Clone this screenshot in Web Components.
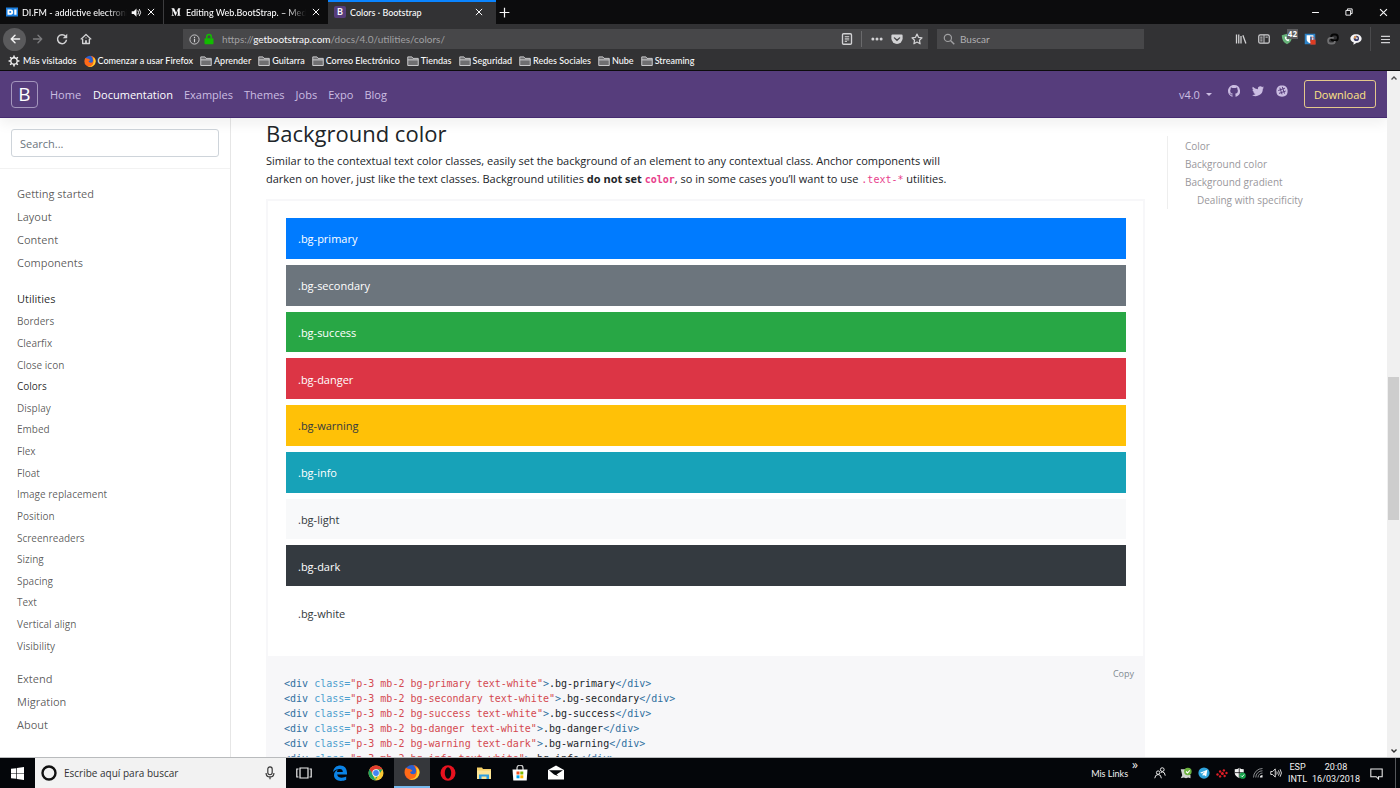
<!DOCTYPE html>
<html lang="es">
<head>
<meta charset="utf-8">
<meta name="viewport" content="width=device-width, initial-scale=1">
<title>Colors · Bootstrap</title>
<style>
  html, body { height: 100%; margin: 0; }
  body {
    --ui-font: "Open Sans", "Noto Sans", sans-serif;
    --chrome-font: Lato, "Open Sans", sans-serif;
    --mono-font: "DejaVu Sans Mono", "Liberation Mono", monospace;
    font-family: var(--ui-font);
    font-size: 11px;
    display: flex;
    flex-direction: column;
    overflow: hidden;
    background: #fff;
  }
</style>
</head>
<body>
  <browser-tabs></browser-tabs>
  <browser-toolbar></browser-toolbar>
  <bookmarks-bar></bookmarks-bar>
  <page-viewport>
    <docs-navbar slot="header"></docs-navbar>
    <docs-sidebar></docs-sidebar>
    <docs-content>
      <color-swatch color="#007bff">.bg-primary</color-swatch>
      <color-swatch color="#6c757d">.bg-secondary</color-swatch>
      <color-swatch color="#28a745">.bg-success</color-swatch>
      <color-swatch color="#dc3545">.bg-danger</color-swatch>
      <color-swatch color="#ffc107" dark>.bg-warning</color-swatch>
      <color-swatch color="#17a2b8">.bg-info</color-swatch>
      <color-swatch color="#f8f9fa" dark>.bg-light</color-swatch>
      <color-swatch color="#343a40">.bg-dark</color-swatch>
      <color-swatch color="#ffffff" dark>.bg-white</color-swatch>
      <code-block slot="code"></code-block>
    </docs-content>
    <docs-toc></docs-toc>
  </page-viewport>
  <task-bar></task-bar>

<script>
// Every icon is drawn in a 16x16 box.
const icons = {
  difm: `<rect y="2" width="16" height="12" fill="#1b7fe0"/><path d="M2 4.5h4.5q3 0 3 3.5t-3 3.5H2zM11 4.5h3v7h-3z" fill="#fff"/><path d="M4.5 6.7h1.3q1.2 0 1.2 1.3t-1.2 1.3H4.5z" fill="#1b7fe0"/>`,
  sound: `<path d="M1 6h3l4-4v12L4 10H1z" fill="currentColor"/><path d="M10 5q2 3 0 6M12 3q4 5 0 10" fill="none" stroke="currentColor" stroke-width="1.4"/>`,
  close: `<path d="M3 3l10 10M13 3L3 13" stroke="currentColor" stroke-width="1.6"/>`,
  medium: `<path d="M1 2h4l3.2 7L11.500 2H15v1l-1 .8v8.400l1 .8v1h-5v-1l1-.8V5L7.500 14h-.6L3 5.500V12l1.500 1.200V14H1v-.8L2.200 12V3.800L1 3z" fill="currentColor"/>`,
  plus: `<path d="M8 2v12M2 8h12" stroke="currentColor" stroke-width="1.5"/>`,
  minimize: `<path d="M3 8h10" stroke="currentColor" stroke-width="1.5"/>`,
  restore: `<path d="M3 5.500h7.500V13H3zM5.500 5.500V3H13v7.500h-2.500" fill="none" stroke="currentColor" stroke-width="1.5"/>`,
  back: `<path d="M14 8H3M8 3L3 8l5 5" fill="none" stroke="currentColor" stroke-width="2" stroke-linecap="round" stroke-linejoin="round"/>`,
  forward: `<path d="M2 8h11M8 3l5 5-5 5" fill="none" stroke="currentColor" stroke-width="1.8" stroke-linecap="round" stroke-linejoin="round"/>`,
  reload: `<path d="M12.800 4.500a6 6 0 1 0 1.200 4.500" fill="none" stroke="currentColor" stroke-width="2"/><path d="M15 1v6H9z" fill="currentColor"/>`,
  home: `<path d="M1 8.500L8 2l7 6.500M3.500 7.500V14h9V7.500" fill="none" stroke="currentColor" stroke-width="1.8" stroke-linejoin="round"/><path d="M6.800 9.500h2.400V14H6.800z" fill="currentColor"/><path d="M7 6.500h2" stroke="currentColor"/>`,
  info: `<circle cx="8" cy="8" r="6.700" fill="none" stroke="currentColor" stroke-width="1.3"/><path d="M8 7v5M8 4v1.700" stroke="currentColor" stroke-width="1.700"/>`,
  lock: `<path d="M5 7V5a3 3 0 0 1 6 0v2" fill="none" stroke="#12bc00" stroke-width="2"/><rect x="2" y="7" width="12" height="8" rx="1" fill="#12bc00"/>`,
  reader: `<rect x="2" y="1" width="12" height="14" rx="1.500" fill="none" stroke="currentColor" stroke-width="1.8"/><path d="M5 4.800h6M5 7h6M5 9.200h6M5 11.300h3" stroke="currentColor" stroke-width="1.200"/>`,
  dots: `<circle cx="2.500" cy="8" r="2" fill="currentColor"/><circle cx="8" cy="8" r="2" fill="currentColor"/><circle cx="13.500" cy="8" r="2" fill="currentColor"/>`,
  pocket: `<path d="M2 2h12q1.500 0 1.500 1.500V7a7.500 7.500 0 0 1-15 0V3.500Q.5 2 2 2z" fill="currentColor"/><path d="M4.500 6.500L8 9.800l3.500-3.300" fill="none" stroke="#474749" stroke-width="1.8" stroke-linecap="round"/>`,
  star: `<path d="M8 1.500l2 4.300 4.700.6-3.400 3.300.8 4.700L8 12.100l-4.100 2.300.8-4.700L1.300 6.400 6 5.800z" fill="none" stroke="currentColor" stroke-width="1.6" stroke-linejoin="round"/>`,
  search: `<circle cx="6.500" cy="6.500" r="4.800" fill="none" stroke="currentColor" stroke-width="1.6"/><path d="M10 10l5 5" stroke="currentColor" stroke-width="1.8"/>`,
  library: `<path d="M2 2v12M5 2v12M8 4v10M10.500 3l4 11" stroke="currentColor" stroke-width="1.700"/>`,
  panel: `<rect x="1" y="2.500" width="14" height="11" rx="2" fill="none" stroke="currentColor" stroke-width="1.6"/><path d="M8 3v10M3 5.500h3M3 8h3M3 10.500h3M10 5.500h3" stroke="currentColor" stroke-width="1.300"/>`,
  shield: `<path d="M8 1l7 2q0 9-7 12Q1 12 1 3z" fill="#67b279"/><path d="M5 5q0 5 5 6l1-2-1.500-1-1 .6L6.800 7l.7-1L6.800 4.500z" fill="#fff"/>`,
  bitwarden: `<rect x="1" y="1" width="14" height="14" fill="#2c83c8"/><path d="M3.500 3h9v5q0 4-4.500 5.500Q3.500 12 3.500 8z" fill="#fff"/><path d="M8 4.500h3V8q0 2.500-3 4z" fill="#2c83c8"/><path d="M9.500 9V7.500a2 2 0 0 1 4 0V9" fill="none" stroke="#dd4c33"/><rect x="8.500" y="9" width="7" height="6.500" fill="#dd3c22"/>`,
  chain: `<g fill="none" stroke-width="2.400"><rect x="5.500" y="2" width="9" height="8" rx="3.500" stroke="#050505"/><path d="M9 6.500H5A3.500 3.500 0 0 0 1.500 10v.500A3.500 3.500 0 0 0 5 14h2a3.500 3.500 0 0 0 3.500-3.500" stroke="#707072"/></g>`,
  bubble: `<path d="M8 1.500c4.500 0 7.500 2.500 7.500 5.800S12.500 13 9 13l-4.500 2.500.5-3C2 11.500.5 9.500.5 7.300.5 4 3.500 1.500 8 1.500z" fill="#f4f4f6"/><circle cx="8.500" cy="7.300" r="3.500" fill="#3b3c66"/><path d="M5 7.300a3.500 3.500 0 0 1 3.500-3.500v3.500z" fill="#e0954a"/><circle cx="9" cy="7" r="1.400" fill="#d9dbe8"/>`,
  menu: `<path d="M1.500 3.500h13M1.500 8h13M1.500 12.500h13" stroke="currentColor" stroke-width="1.8"/>`,
  gear: `<circle cx="8" cy="8" r="4.300" fill="none" stroke="currentColor" stroke-width="1.8"/><path d="M8 .8v2.500M8 12.700v2.500M.8 8h2.500M12.700 8h2.500M2.900 2.900l1.800 1.800M11.300 11.300l1.800 1.800M13.100 2.900l-1.800 1.800M4.700 11.300l-1.800 1.800" stroke="currentColor" stroke-width="2"/>`,
  folder: `<path d="M1 14V2.500h5.500L8 4.500h7V14z" fill="#6f6f71" stroke="#d6d6d8" stroke-width="1.200"/><path d="M1 6.500h14" stroke="#d6d6d8" stroke-width="1.200"/>`,
  firefox: `<circle cx="8" cy="8" r="7" fill="#2b5fd0"/><path d="M2 3.500l1.800 1.300Q5.500 4.300 7 5.500L8.500 7 6 8q.5 2.500 3.500 2.300Q12 10 12 7.500 12.300 3.500 9 1q6.500 1 6.500 7.500A7.500 7.500 0 0 1 .5 8.500Q.5 5.500 2 3.500z" fill="#ff6a16"/><path d="M15.500 8.500A7.500 7.500 0 0 1 5 15q6.500.5 7.500-4.500T11.500 3q4 1.500 4 5.500z" fill="#ffd02e"/><path d="M.6 8q.2 5 4.700 7.300Q1 14 .6 8z" fill="#e22850"/>`,
  github: `<path d="M8 0C3.580 0 0 3.580 0 8c0 3.540 2.290 6.530 5.470 7.590.4.070.55-.17.55-.38v-1.490c-2.010.37-2.530-.49-2.690-.94-.09-.23-.48-.94-.82-1.130-.28-.15-.68-.52-.01-.53.63-.01 1.080.58 1.230.82.72 1.210 1.870.87 2.330.66.070-.52.280-.87.510-1.070-1.780-.2-3.640-.89-3.640-3.950 0-.87.310-1.590.820-2.150-.08-.2-.36-1.020.080-2.120 0 0 .67-.21 2.200.82a7.600 7.600 0 0 1 4 0c1.530-1.040 2.200-.82 2.200-.82.440 1.100.160 1.920.080 2.120.510.560.820 1.270.820 2.150 0 3.070-1.870 3.750-3.650 3.950.29.250.54.730.54 1.480v2.200c0 .21.150.46.550.38A8 8 0 0 0 8 0z" fill="currentColor"/>`,
  twitter: `<path d="M16 3.200a6.500 6.500 0 0 1-1.900.5 3.300 3.300 0 0 0 1.400-1.800 6.500 6.500 0 0 1-2 .8A3.300 3.300 0 0 0 7.900 5.700 9.300 9.300 0 0 1 1.100 2.300a3.300 3.300 0 0 0 1 4.400 3.200 3.200 0 0 1-1.500-.4 3.300 3.300 0 0 0 2.600 3.200 3.300 3.300 0 0 1-1.500.1 3.300 3.300 0 0 0 3.100 2.300A6.600 6.600 0 0 1 0 13.200a9.300 9.300 0 0 0 14.400-8.300 6.700 6.700 0 0 0 1.600-1.700z" fill="currentColor"/>`,
  slack: `<path d="M8 .5c5 0 7.500 2.500 7.500 7.500s-2.500 7.500-7.500 7.500S.5 13 .5 8 3 .5 8 .5z" fill="currentColor"/><path d="M5.300 4l2.600 8M8.600 3l2.600 8M3.500 7.200l8-2.800M4.500 11l8-2.800" stroke="#563d7c" stroke-width="1.300" stroke-linecap="round"/>`,
  windows: `<path d="M0 2.300l6.500-.9v6.200H0zM7.300 1.300L16 0v7.600H7.300zM0 8.400h6.500v6.200L0 13.700zM7.300 8.400H16V16l-8.700-1.300z" fill="#fff"/>`,
  cortana: `<circle cx="8" cy="8" r="6.500" fill="none" stroke="#111" stroke-width="2.400"/>`,
  mic: `<rect x="5.500" y="1" width="5" height="9" rx="2.500" fill="none" stroke="#333" stroke-width="1.300"/><path d="M3.500 8q0 4.500 4.500 4.500T12.500 8M8 12.500V15" fill="none" stroke="#333" stroke-width="1.300"/>`,
  taskview: `<path d="M4 3h8v10H4zM2.500 4H.8v8h1.700M13.500 4h1.700v8h-1.700" fill="none" stroke="#eee" stroke-width="1.200"/>`,
  edge: `<path d="M1 7C1.800 2.500 4.700.5 8.200.5 12.500.5 15 3.500 15 8v1.500H5.200c.2 2.500 2.300 3.200 4.500 3.200 1.800 0 3.200-.5 4.500-1.200v3.200c-1.500.8-3.400 1.200-5.300 1.200C4.800 15.900 2 13.500 2 10.200c0-2.700 1.500-4.700 4-5.700-.6.600-.9 1.500-1 2.500h5.800c0-2-.9-3.100-3-3.100C5 3.900 2.700 5 1 7z" fill="#0b83e6"/>`,
  chrome: `<circle cx="8" cy="8" r="7.500" fill="#fcc934"/><path d="M14.500 4.300H8l-6.500 0L5 10.500 7.500 15.500A7.500 7.500 0 0 1 1.500 4.300L5 9.700l3 1.700-1 4z" fill="#1ea362"/><path d="M1.500 4.300A7.500 7.500 0 0 1 14.500 4.300H8L5 9z" fill="#e33b2e"/><circle cx="8" cy="8" r="3.700" fill="#fff"/><circle cx="8" cy="8" r="2.900" fill="#4285f4"/>`,
  opera: `<ellipse cx="8" cy="8" rx="7.500" ry="7.800" fill="#e8121f"/><ellipse cx="8" cy="8" rx="3.200" ry="5.700" fill="#04060a"/>`,
  explorer: `<path d="M1 2.500h5l1 1.500h8v10H1z" fill="#f5d069"/><path d="M1 5.500h14V14H1z" fill="#fde596"/><path d="M3 14V9.500h10V14h-2.500v-2.500h-5V14z" fill="#2f9fe0"/>`,
  store: `<path d="M5 5V3a3 3 0 0 1 6 0v2" fill="none" stroke="#ccc" stroke-width="1.300"/><path d="M.5 4.500h15l-.8 11H1.300z" fill="#fff"/><path d="M4.500 6.500h3v3h-3z" fill="#f25022"/><path d="M8.300 6.500h3v3h-3z" fill="#7fba00"/><path d="M4.500 10.300h3v3h-3z" fill="#00a4ef"/><path d="M8.300 10.300h3v3h-3z" fill="#ffb900"/>`,
  mail: `<path d="M0 5l8-4.500L16 5v9.500H0z" fill="#fff"/><path d="M1 5.300h14L8.500 9.500l2 1.800L6 9.500z" fill="#04060a"/>`,
  people: `<circle cx="11" cy="3.500" r="2.500" fill="none" stroke="#eee" stroke-width="1.300"/><circle cx="5.500" cy="7.500" r="2.300" fill="none" stroke="#eee" stroke-width="1.300"/><path d="M1 15q.5-5 4.500-5T9.800 15M9 7.500l2-1q3.500 0 4 5" fill="none" stroke="#eee" stroke-width="1.300"/>`,
  guard: `<path d="M1 3h9v4l4 4v4l-3-1-3 1-3-1-4 1 2-4z" fill="#cfd3cf"/><circle cx="10.500" cy="6" r="5" fill="#6cb33f"/><path d="M8 6l2 2 3-3.500" fill="none" stroke="#fff" stroke-width="1.500"/>`,
  telegram: `<circle cx="8" cy="8" r="7.500" fill="#2fa3dc"/><path d="M2.800 7.800l9.700-4-1.600 8.800-3-2-1.500 1.300-.4-2.700 4-3.700-5 3.200z" fill="#fff"/>`,
  radeon: `<g fill="#e01e26"><circle cx="2" cy="10" r="1.600"/><circle cx="5.500" cy="6" r="1.600"/><circle cx="10.500" cy="4.500" r="1.600"/><circle cx="14" cy="8" r="1.600"/><circle cx="8.500" cy="8.700" r="2"/><circle cx="5.500" cy="12.500" r="1.600"/><circle cx="11.500" cy="12" r="1.600"/></g>`,
  defender: `<path d="M7 1q2 2 6 2v5q0 4-6 7-6-3-6-7V3q4 0 6-2z" fill="#f4f4f4"/><path d="M7 1v14M1 7.500h12" stroke="#04060a"/><circle cx="11.500" cy="11.500" r="4.200" fill="#14a34a"/><path d="M9.500 11.500l1.500 1.500 2.500-3" stroke="#fff" stroke-width="1.200" fill="none"/>`,
  wifi: `<path d="M2 14A12 12 0 0 1 14 2M5 14a9 9 0 0 1 9-9M8 14a6 6 0 0 1 6-6" stroke="#8d8f92" stroke-width="1.300" fill="none"/><path d="M10.500 14a3.500 3.500 0 0 1 3.500-3.500V14z" fill="#eee"/>`,
  volume: `<path d="M1 6h2.500L7 2.500v11L3.500 10H1z" fill="none" stroke="#eee" stroke-width="1.200"/><path d="M9 6q1.200 2 0 4M11.300 4.500q2.300 3.500 0 7M13.500 3q3.500 5 0 10" fill="none" stroke="#eee" stroke-width="1.200"/>`,
  action: `<path d="M1 2.500h14v9.500h-4.500v2.800L7.700 12H1z" fill="none" stroke="#eee" stroke-width="1.300"/>`,
  up: `<path d="M3 11l5-5 5 5" fill="none" stroke="#505050" stroke-width="2.800"/>`,
  down: `<path d="M3 5l5 5 5-5" fill="none" stroke="#303030" stroke-width="2.800"/>`
};

// Resets shared by every shadow root.
const baseStyles = `
  :host, *, *::before, *::after { box-sizing: border-box; }
  a { color: inherit; text-decoration: none; }
  button {
    display: inline-flex; align-items: center; justify-content: center;
    margin: 0; padding: 0; border: 0; background: none; color: inherit; font: inherit;
  }
  input { font: inherit; margin: 0; min-width: 0; }
  ul { list-style: none; margin: 0; padding: 0; }
`;

class BaseElement extends HTMLElement {
  constructor() {
    super();
    this.attachShadow({ mode: "open" });
  }

  connectedCallback() {
    this.shadowRoot.innerHTML = `<style>${baseStyles}${this.styles()}</style>${this.markup()}`;
  }

  styles() { return ""; }
  markup() { return ""; }
}

class UiIcon extends BaseElement {
  styles() {
    const size = this.getAttribute("size") || 12;
    return `
      :host { display: inline-flex; flex: none; width: ${size}px; height: ${size}px; }
      svg { width: 100%; height: 100%; display: block; }
    `;
  }

  markup() {
    return `<svg viewBox="0 0 16 16" aria-hidden="true">${icons[this.getAttribute("name")]}</svg>`;
  }
}

class BrowserTabs extends BaseElement {
  styles() {
    return `
      :host {
        display: flex; flex: none; height: 24px; background: #0c0c0d; color: #f9f9fa;
        font-family: var(--chrome-font); font-size: 9px; font-weight: 500;
      }
      .tab {
        display: flex; align-items: center; gap: 4px; width: 164px; padding: 0 7px 0 6px;
        border-right: 1px solid #3c3c3e;
      }
      .tab.second { padding-left: 7px; border-right: 0; gap: 5px; }
      .tab.active { width: 168px; padding-right: 12px; border-right: 0; background: #323234; box-shadow: inset 0 2px #0a84ff; }
      .label {
        flex: 1; min-width: 0; overflow: hidden; white-space: nowrap;
        -webkit-mask-image: linear-gradient(to left, transparent, #000 20px);
      }
      .active .label { -webkit-mask-image: none; }
      .brand {
        width: 12px; height: 12px; border-radius: 2px; background: #563d7c;
        font-size: 9px; line-height: 12px; font-weight: 700; text-align: center;
      }
      .add { width: 17px; }
      .window { display: flex; margin-left: auto; }
      .window button { width: 34px; }
    `;
  }

  markup() {
    return `
      <div class="tab"><ui-icon name="difm"></ui-icon><span class="label">DI.FM - addictive electronic music</span><ui-icon name="sound" size="11"></ui-icon><button aria-label="Cerrar"><ui-icon name="close" size="10"></ui-icon></button></div>
      <div class="tab second"><ui-icon name="medium" size="10"></ui-icon><span class="label">Editing Web.BootStrap. – Medium</span><button aria-label="Cerrar"><ui-icon name="close" size="10"></ui-icon></button></div>
      <div class="tab active"><span class="brand">B</span><span class="label">Colors · Bootstrap</span><button aria-label="Cerrar"><ui-icon name="close" size="10"></ui-icon></button></div>
      <button class="add" aria-label="Nueva"><ui-icon name="plus" size="13"></ui-icon></button>
      <div class="window">
        <button aria-label="Minimizar"><ui-icon name="minimize" size="11"></ui-icon></button>
        <button aria-label="Restaurar"><ui-icon name="restore" size="10"></ui-icon></button>
        <button aria-label="Salir"><ui-icon name="close" size="11"></ui-icon></button>
      </div>
    `;
  }
}

class BrowserToolbar extends BaseElement {
  styles() {
    return `
      :host {
        display: flex; flex: none; align-items: center; height: 30px; padding: 0 3px;
        background: #323234; color: #d2d2d4; font-family: var(--chrome-font); font-size: 10px;
      }
      .nav { width: 24px; height: 23px; }
      .nav.back { width: 23px; border-radius: 50%; background: #5a5a5c; color: #f0f0f0; }
      .nav.forward { color: #7c7c7e; }
      .spacer { flex: 0 1 85px; }
      .field { display: flex; align-items: center; height: 20px; background: #474749; }
      .url { flex: 1; min-width: 0; gap: 3px; padding: 0 3px 0 6px; }
      .url a { flex: 1; min-width: 0; margin-left: 4px; color: #a0a0a2; white-space: nowrap; overflow: hidden; }
      .url a b { color: #f9f9fa; font-weight: 400; }
      .url button { width: 17px; }
      .url .reader { width: 22px; }
      .rule { width: 1px; height: 16px; background: #6a6a6c; margin-right: 3px; }
      .find { flex: 0 1 207px; margin-left: 9px; padding: 0 6px; gap: 5px; color: #a0a0a2; }
      .find input { flex: 1; border: 0; outline: 0; padding: 0; background: none; color: inherit; }
      .find input::placeholder { color: #b0b0b2; }
      .tools { display: flex; align-items: center; }
      .tools button { position: relative; width: 23px; height: 23px; }
      .badge {
        position: absolute; top: 1px; right: 0; padding: 0 1px;
        background: #5d5d5f; color: #fff; font-family: var(--ui-font); font-size: 8px; line-height: 10px; font-weight: 700;
      }
      .split { width: 1px; height: 24px; margin: 0 3px; background: #4a4a4c; }
    `;
  }

  markup() {
    return `
      <button class="nav back" aria-label="Atrás"><ui-icon name="back"></ui-icon></button>
      <button class="nav forward" aria-label="Adelante"><ui-icon name="forward"></ui-icon></button>
      <button class="nav" aria-label="Recargar"><ui-icon name="reload"></ui-icon></button>
      <button class="nav" aria-label="Inicio"><ui-icon name="home"></ui-icon></button>
      <div class="spacer"></div>
      <div class="field url">
        <ui-icon name="info" size="11"></ui-icon><ui-icon name="lock"></ui-icon>
        <a href="#">https://<b>getbootstrap.com</b>/docs/4.0/utilities/colors/</a>
        <button class="reader" aria-label="Lectura"><ui-icon name="reader"></ui-icon></button>
        <span class="rule"></span>
        <button aria-label="Acciones"><ui-icon name="dots"></ui-icon></button>
        <button aria-label="Pocket"><ui-icon name="pocket"></ui-icon></button>
        <button aria-label="Marcar"><ui-icon name="star"></ui-icon></button>
      </div>
      <label class="field find"><ui-icon name="search"></ui-icon><input type="search" placeholder="Buscar" aria-label="Buscar"></label>
      <div class="spacer"></div>
      <div class="tools">
        <button aria-label="Catálogo"><ui-icon name="library"></ui-icon></button>
        <button aria-label="Panel lateral"><ui-icon name="panel"></ui-icon></button>
        <button aria-label="Bloqueador"><ui-icon name="shield"></ui-icon><span class="badge">42</span></button>
        <button aria-label="Contraseñas"><ui-icon name="bitwarden"></ui-icon></button>
        <button aria-label="Enlaces"><ui-icon name="chain"></ui-icon></button>
        <button aria-label="Mensajes"><ui-icon name="bubble"></ui-icon></button>
        <span class="split"></span>
        <button aria-label="Menú"><ui-icon name="menu" size="11"></ui-icon></button>
      </div>
    `;
  }
}

class BookmarksBar extends BaseElement {
  styles() {
    return `
      :host {
        display: block; flex: none; height: 17px; padding: 0 8px;
        background: #323234; border-bottom: 1px solid #0c0c0d; color: #f9f9fa;
        font-family: var(--chrome-font); font-size: 9px; font-weight: 500; line-height: 14px;
      }
      ul { display: flex; gap: 7px; }
      a { display: flex; align-items: center; gap: 3px; white-space: nowrap; }
      li + li a { gap: 2px; }
    `;
  }

  markup() {
    const items = [
      ["gear", "Más visitados"], ["firefox", "Comenzar a usar Firefox"], ["folder", "Aprender"],
      ["folder", "Guitarra"], ["folder", "Correo Electrónico"], ["folder", "Tiendas"],
      ["folder", "Seguridad"], ["folder", "Redes Sociales"], ["folder", "Nube"], ["folder", "Streaming"]
    ];
    return `<ul>${items.map(([icon, text]) => `<li><a href="#"><ui-icon name="${icon}"></ui-icon>${text}</a></li>`).join("")}</ul>`;
  }
}

class PageViewport extends BaseElement {
  styles() {
    return `
      :host { display: flex; flex: 1; min-height: 0; border-bottom: 1px solid #b9bbbd; }
      .page { flex: 1; min-width: 0; display: flex; flex-direction: column; overflow: hidden; color: #212529; }
      .row { flex: 1; min-height: 0; display: flex; }
    `;
  }

  markup() {
    return `
      <div class="page">
        <slot name="header"></slot>
        <div class="row"><slot></slot></div>
      </div>
      <page-scrollbar></page-scrollbar>
    `;
  }
}

class PageScrollbar extends BaseElement {
  styles() {
    return `
      :host { display: flex; flex-direction: column; flex: none; width: 13px; background: #f0f0f0; }
      button { height: 13px; }
      .track { flex: 1; display: flex; flex-direction: column; }
      .before { flex: 293; }
      .thumb { flex: 143; margin: 0 1px; background: #cdcdcd; }
      .after { flex: 224; }
    `;
  }

  markup() {
    return `
      <button aria-label="Subir"><ui-icon name="up" size="8"></ui-icon></button>
      <div class="track"><div class="before"></div><div class="thumb"></div><div class="after"></div></div>
      <button aria-label="Bajar"><ui-icon name="down" size="8"></ui-icon></button>
    `;
  }
}

class DocsNavbar extends BaseElement {
  styles() {
    return `
      :host {
        position: relative; z-index: 1; display: flex; flex: none; align-items: center; height: 47px; padding: 0 11px;
        background: #563d7c; color: #cbbde2; border-bottom: 1px solid #452b70;
        box-shadow: 0 6px 12px rgba(0, 0, 0, .06);
      }
      .logo {
        display: flex; align-items: center; justify-content: center; width: 27px; height: 27px; margin-right: 6px;
        border: 1px solid #a496bd; border-radius: 4px; color: #fff; font-size: 19px; line-height: 25px;
      }
      ul { display: flex; align-items: center; }
      .links a { display: block; padding: 2px 6px 0; line-height: 18px; }
      .links a.active { color: #fff; font-weight: 500; }
      .links li:nth-child(n + 3) a { padding-left: 5px; }
      .right { margin-left: auto; }
      .version { gap: 6px; padding: 0 10px 0 0; }
      .caret { border: 3px solid transparent; border-top-color: currentColor; border-bottom: 0; }
      .social a { display: flex; padding: 0 6px 7px; }
      .download {
        display: block; margin-left: 10px; padding: 5px 9px 3px; border: 1px solid #e4c98c; border-radius: 3px;
        color: #ffe484; line-height: 18px;
      }
    `;
  }

  markup() {
    const links = ["Home", "Documentation", "Examples", "Themes", "Jobs", "Expo", "Blog"];
    return `
      <a class="logo" href="#">B</a>
      <ul class="links">${links.map(text => `<li><a href="#"${text === "Documentation" ? ' class="active"' : ""}>${text}</a></li>`).join("")}</ul>
      <ul class="right">
        <li><button class="version">v4.0 <span class="caret"></span></button></li>
        <li class="social"><a href="#" aria-label="GitHub"><ui-icon name="github"></ui-icon></a></li>
        <li class="social"><a href="#" aria-label="Twitter"><ui-icon name="twitter"></ui-icon></a></li>
        <li class="social"><a href="#" aria-label="Slack"><ui-icon name="slack"></ui-icon></a></li>
        <li><a class="download" href="#">Download</a></li>
      </ul>
    `;
  }
}

class DocsSidebar extends BaseElement {
  styles() {
    return `
      :host { display: block; flex: 0 1 231px; border-right: 1px solid #e6e6e6; overflow: hidden; }
      form { padding: 11px; border-bottom: 1px solid #f2f2f2; }
      form input {
        display: block; width: 100%; height: 28px; padding: 0 8px;
        border: 1px solid #ced4da; border-radius: 3px; color: #495057;
      }
      form input::placeholder { color: #6c757d; opacity: 1; }
      nav { padding: 13px 17px; color: rgba(0, 0, 0, .65); }
      .toc { display: block; padding: 3px 0; line-height: 17px; }
      .active { color: rgba(0, 0, 0, .85); font-weight: 500; }
      .group { padding: 13px 0 10px; }
      .group ul {
        display: grid; grid-auto-rows: 1fr; align-items: center; min-height: 346px; margin-top: 1px;
        font-size: 10px; line-height: 15px;
      }
    `;
  }

  markup() {
    const top = ["Getting started", "Layout", "Content", "Components"];
    const utilities = [
      "Borders", "Clearfix", "Close icon", "Colors", "Display", "Embed", "Flex", "Float", "Image replacement",
      "Position", "Screenreaders", "Sizing", "Spacing", "Text", "Vertical align", "Visibility"
    ];
    const bottom = ["Extend", "Migration", "About"];
    const link = text => `<a class="toc" href="#">${text}</a>`;
    return `
      <form><input type="search" placeholder="Search..." aria-label="Search"></form>
      <nav>
        ${top.map(link).join("")}
        <div class="group">
          <a class="toc active" href="#">Utilities</a>
          <ul>${utilities.map(text => `<li><a href="#"${text === "Colors" ? ' class="active"' : ""}>${text}</a></li>`).join("")}</ul>
        </div>
        ${bottom.map(link).join("")}
      </nav>
    `;
  }
}

class DocsContent extends BaseElement {
  styles() {
    return `
      :host { display: block; flex: 1; min-width: 0; padding: 0 11px 0 35px; overflow: hidden; }
      h2 { margin: 0 0 4px; font-size: 22px; line-height: 30px; font-weight: 400; }
      p { margin: 0; max-width: 700px; line-height: 18px; }
      code { font-family: var(--mono-font); font-size: 10px; color: #e83e8c; }
      strong code { font-weight: 700; }
      .example {
        display: grid; grid-auto-rows: 1fr; gap: 6px; min-height: 457px; margin-top: 10px;
        padding: 17px 17px 23px 18px; border: 2px solid #f7f7f9; border-bottom: 0;
      }
    `;
  }

  markup() {
    return `
      <h2>Background color</h2>
      <p>Similar to the contextual text color classes, easily set the background of an element to any contextual class. Anchor components will darken on hover, just like the text classes. Background utilities <strong>do not set <code>color</code></strong>, so in some cases you’ll want to use <code>.text-*</code> utilities.</p>
      <div class="example"><slot></slot></div>
      <slot name="code"></slot>
    `;
  }
}

class ColorSwatch extends BaseElement {
  styles() {
    return `
      :host {
        display: flex; align-items: center; padding: 2px 12px 0; line-height: 18px;
        background: ${this.getAttribute("color")}; color: ${this.hasAttribute("dark") ? "#343a40" : "#fff"};
      }
    `;
  }

  markup() { return `<slot></slot>`; }
}

class CodeBlock extends BaseElement {
  styles() {
    return `
      :host { display: block; position: relative; padding: 20px 18px; background: #f7f7f9; }
      pre { margin: 0; font-family: var(--mono-font); font-size: 10px; line-height: 15px; color: #212529; }
      .t { color: #2f6f9f; }
      .a { color: #4f9fcf; }
      .s { color: #d44950; }
      button { position: absolute; top: 10px; right: 11px; color: #818a91; font-size: 9px; line-height: 15px; }
    `;
  }

  markup() {
    const rows = [
      ["primary", "white"], ["secondary", "white"], ["success", "white"], ["danger", "white"],
      ["warning", "dark"], ["info", "white"], ["light", "dark"], ["dark", "white"], ["white", "dark"]
    ];
    const line = ([name, text]) =>
      `<span class="t">&lt;div</span> <span class="a">class=</span><span class="s">"p-3 mb-2 bg-${name} text-${text}"</span><span class="t">&gt;</span>.bg-${name}<span class="t">&lt;/div&gt;</span>`;
    return `<button>Copy</button><pre>${rows.map(line).join("\n")}</pre>`;
  }
}

class DocsToc extends BaseElement {
  styles() {
    return `
      :host { display: block; flex: none; width: 231px; padding: 18px 11px; color: #99979c; font-size: 10px; line-height: 18px; }
      ul { border-left: 1px solid #eee; }
      :host > ul { padding-top: 1px; }
      li { padding-left: 17px; }
      ul ul { border-left: 0; }
      ul ul li { padding-left: 12px; }
    `;
  }

  markup() {
    return `
      <ul>
        <li><a href="#">Color</a></li>
        <li><a href="#">Background color</a></li>
        <li><a href="#">Background gradient</a>
          <ul><li><a href="#">Dealing with specificity</a></li></ul>
        </li>
      </ul>
    `;
  }
}

class TaskBar extends BaseElement {
  styles() {
    return `
      :host {
        display: flex; flex: none; align-items: center; height: 30px; background: #04060a; color: #f2f2f2;
        font-family: var(--chrome-font); font-size: 9px;
      }
      button { height: 30px; }
      .start { width: 35px; }
      .find { display: flex; align-items: center; gap: 7px; width: 251px; height: 30px; padding: 0 9px 0 6px; background: #f2f2f2; }
      .find input { flex: 1; border: 0; outline: 0; padding: 0; background: none; font-family: var(--ui-font); font-size: 10px; }
      .find input::placeholder { color: #333; opacity: 1; }
      .apps { display: flex; }
      .apps button { width: 36px; }
      .apps .active { background: #35373b; border-bottom: 2px solid #76b9ed; }
      .tray { display: flex; align-items: center; margin-left: auto; }
      .tray button { width: 18px; }
      .chevron { align-self: flex-start; margin: 1px 0 0 4px; font-family: var(--ui-font); font-size: 12px; line-height: 12px; }
      .tray .people { width: 26px; margin: 0 4px 0 9px; }
      .stack { width: 25px; text-align: center; font-family: Roboto, var(--ui-font); line-height: 12px; }
      .clock { width: 52px; }
      .tray .action { width: 28px; }
      .desktop { width: 5px; height: 30px; margin-left: 5px; border-left: 1px solid #55575b; }
    `;
  }

  markup() {
    const apps = ["taskview", "edge", "chrome", "firefox", "opera", "explorer", "store", "mail"];
    const tray = ["guard", "telegram", "radeon", "defender", "wifi", "volume"];
    return `
      <button class="start" aria-label="Inicio"><ui-icon name="windows" size="13"></ui-icon></button>
      <label class="find"><ui-icon name="cortana" size="16"></ui-icon><input type="search" placeholder="Escribe aquí para buscar" aria-label="Escribe aquí para buscar"><ui-icon name="mic" size="14"></ui-icon></label>
      <div class="apps">${apps.map(name => `<button aria-label="${name}"${name === "firefox" ? ' class="active"' : ""}><ui-icon name="${name}" size="16"></ui-icon></button>`).join("")}</div>
      <div class="tray">
        <span>Mis Links</span><span class="chevron">»</span>
        <button class="people" aria-label="Contactos"><ui-icon name="people"></ui-icon></button>
        ${tray.map(name => `<button aria-label="${name}"><ui-icon name="${name}"></ui-icon></button>`).join("")}
        <span class="stack">ESP<br>INTL</span>
        <span class="stack clock">20:08<br>16/03/2018</span>
        <button class="action" aria-label="Notificaciones"><ui-icon name="action" size="13"></ui-icon></button>
        <span class="desktop"></span>
      </div>
    `;
  }
}

customElements.define("ui-icon", UiIcon);
customElements.define("browser-tabs", BrowserTabs);
customElements.define("browser-toolbar", BrowserToolbar);
customElements.define("bookmarks-bar", BookmarksBar);
customElements.define("page-viewport", PageViewport);
customElements.define("page-scrollbar", PageScrollbar);
customElements.define("docs-navbar", DocsNavbar);
customElements.define("docs-sidebar", DocsSidebar);
customElements.define("docs-content", DocsContent);
customElements.define("color-swatch", ColorSwatch);
customElements.define("code-block", CodeBlock);
customElements.define("docs-toc", DocsToc);
customElements.define("task-bar", TaskBar);
</script>
</body>
</html>
